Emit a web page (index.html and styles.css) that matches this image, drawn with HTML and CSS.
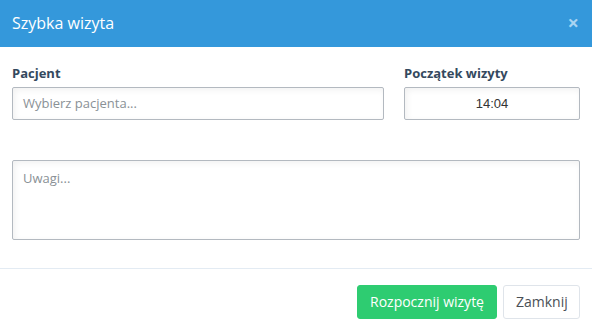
FILE: index.html
```html
<!DOCTYPE html>
<html lang="pl">
<head>
<meta charset="utf-8">
<link rel="stylesheet" href="styles.css">
</head>
<body>
<div class="modal">
  <div class="modal-header">
    <span class="modal-title">Szybka wizyta</span>
    <span class="close">×</span>
  </div>
  <div class="modal-body">
    <div class="row">
      <div class="field field-patient">
        <label class="label">Pacjent</label>
        <div class="input placeholder">Wybierz pacjenta...</div>
      </div>
      <div class="field field-time">
        <label class="label">Początek wizyty</label>
        <div class="input center">14:04</div>
      </div>
    </div>
    <div class="textarea placeholder">Uwagi...</div>
  </div>
  <div class="modal-footer">
    <button class="btn btn-success">Rozpocznij wizytę</button>
    <button class="btn btn-default">Zamknij</button>
  </div>
</div>
</body>
</html>
```
FILE: styles.css
```css
html, body {
  margin: 0;
  padding: 0;
  background: #ffffff;
  font-family: "Open Sans", "Liberation Sans", sans-serif;
}
.modal {
  width: 592px;
  height: 333px;
  display: flex;
  flex-direction: column;
  background: #fff;
}
.modal-header {
  height: 47px;
  background: #3498db;
  display: flex;
  align-items: center;
  justify-content: space-between;
  padding: 0 12px;
  box-sizing: border-box;
}
.modal-title {
  color: #ffffff;
  font-size: 16px;
  line-height: 20px;
  margin-top: -2px;
}
.close {
  color: #a9d4f2;
  font-size: 20px;
  font-weight: 700;
  line-height: 18px;
  margin-right: 1px;
  margin-top: -2px;
}
.modal-body {
  padding: 17px 12px 0 12px;
  border-bottom: 1px solid #e3ebf3;
  height: 222px;
  box-sizing: border-box;
}
.row {
  display: flex;
  gap: 20px;
}
.field-patient {
  width: 372px;
}
.field-time {
  width: 176px;
}
.label {
  display: block;
  font-size: 13px;
  font-weight: 700;
  color: #34495e;
  line-height: 18px;
  margin-bottom: 5px;
}
.input {
  height: 33px;
  box-sizing: border-box;
  border: 1px solid #b3b9c0;
  border-radius: 2px;
  box-shadow: inset 2px 2px 6px rgba(0,0,0,0.06);
  padding: 0 10px;
  font-size: 13px;
  line-height: 31px;
  color: #333;
}
.placeholder {
  color: #8a9196;
}
.center {
  text-align: center;
  color: #333;
  font-family: "Liberation Sans", Arial, sans-serif;
}
.textarea {
  margin-top: 40px;
  height: 80px;
  box-sizing: border-box;
  border: 1px solid #b3b9c0;
  border-radius: 2px;
  box-shadow: inset 2px 2px 6px rgba(0,0,0,0.06);
  padding: 7px 10px;
  font-size: 13px;
  line-height: 20px;
}
.modal-footer {
  display: flex;
  justify-content: flex-end;
  gap: 6px;
  padding: 16px 12px 0 12px;
}
.btn {
  height: 34px;
  box-sizing: border-box;
  border-radius: 3px;
  font-family: "Open Sans", "Liberation Sans", sans-serif;
  font-size: 14px;
  padding: 0 12px;
  line-height: 32px;
}
.btn-success {
  width: 140px;
  background: #2ecc71;
  border: 1px solid #2ecc71;
  color: #ffffff;
}
.btn-default {
  width: 77px;
  background: #ffffff;
  border: 1px solid #dfe4ea;
  color: #4a4f55;
}
```
